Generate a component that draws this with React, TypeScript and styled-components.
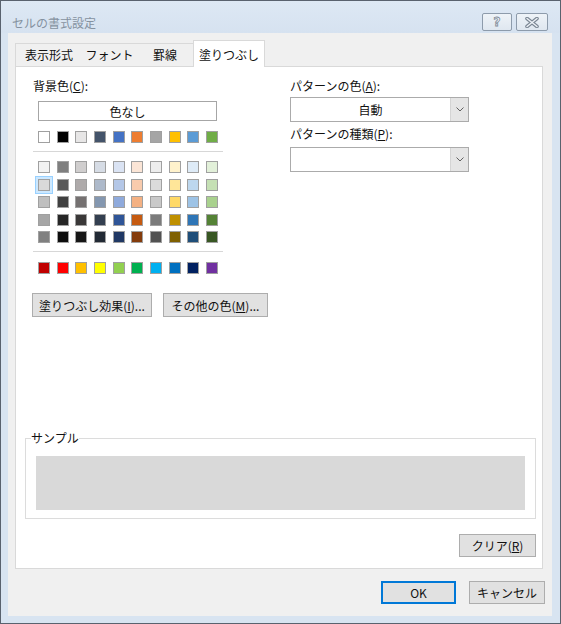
import * as React from 'react';
import styled, { createGlobalStyle } from 'styled-components';

const THEME_COLORS = ['#FFFFFF', '#000000', '#E7E6E6', '#44546A', '#4472C4', '#ED7D31', '#A5A5A5', '#FFC000', '#5B9BD5', '#70AD47'];

const TINTS = [
  ['#F2F2F2', '#7F7F7F', '#D0CECE', '#D6DCE5', '#DAE3F3', '#FBE5D6', '#EDEDED', '#FFF2CC', '#DEEBF7', '#E2F0D9'],
  ['#D9D9D9', '#595959', '#AEAAAA', '#ADB9CA', '#B4C7E7', '#F8CBAD', '#DBDBDB', '#FFE699', '#BDD7EE', '#C5E0B4'],
  ['#BFBFBF', '#404040', '#757171', '#8497B0', '#8FAADC', '#F4B183', '#C9C9C9', '#FFD966', '#9DC3E6', '#A9D18E'],
  ['#A6A6A6', '#262626', '#3A3838', '#333F50', '#2F5597', '#C55A11', '#7B7B7B', '#BF9000', '#2E75B6', '#548235'],
  ['#808080', '#0D0D0D', '#161616', '#222A35', '#203864', '#843C0C', '#525252', '#7F6000', '#1F4E79', '#385723'],
];

const STANDARD_COLORS = ['#C00000', '#FF0000', '#FFC000', '#FFFF00', '#92D050', '#00B050', '#00B0F0', '#0070C0', '#002060', '#7030A0'];

const TABS = [
  { label: '表示形式', width: 67 },
  { label: 'フォント', width: 55 },
  { label: '罫線', width: 56 },
  { label: '塗りつぶし', width: 72 },
];

const GlobalStyle = createGlobalStyle`
  html, body {
    margin: 0;
    padding: 0;
    width: 561px;
    height: 624px;
    overflow: hidden;
    background: #ffffff;
  }
  body {
    font-family: "Noto Sans CJK JP", "Noto Sans", sans-serif;
    font-size: 12px;
    color: #111;
  }
`;

function Chevron() {
  return (
    <svg width="8" height="5" viewBox="0 0 8 5">
      <polyline points="0.5,0.5 4,4 7.5,0.5" fill="none" stroke="#606060" strokeWidth="1" />
    </svg>
  );
}

function CloseGlyph() {
  return (
    <svg width="14" height="11" viewBox="0 0 14 11">
      <path d="M2 1.5 L12 9.5 M12 1.5 L2 9.5" stroke="#7a8693" strokeWidth="3.6" strokeLinecap="round" />
      <path d="M2 1.5 L12 9.5 M12 1.5 L2 9.5" stroke="#eef2f7" strokeWidth="1.4" strokeLinecap="round" />
    </svg>
  );
}

export default function App() {
  return (
    <>
      <GlobalStyle />
      <Window>
        <TitleBar>
          <Title>セルの書式設定</Title>
          <TitleButtons>
            <CaptionButton $width={30}>
              <HelpGlyph>?</HelpGlyph>
            </CaptionButton>
            <CaptionButton $width={32}>
              <CloseGlyph />
            </CaptionButton>
          </TitleButtons>
        </TitleBar>

        <Body>
          <TabRow>
            {TABS.map((t, i) => (
              <Tab key={t.label} $width={t.width} $active={i === TABS.length - 1} $first={i === 0}>
                {t.label}
              </Tab>
            ))}
          </TabRow>

          <Panel>
            <TopSection>
              <LeftColumn>
                <Label>
                  背景色(<u>C</u>):
                </Label>
                <NoColorBox>色なし</NoColorBox>
                <SwatchRow>
                  {THEME_COLORS.map((c) => (
                    <Swatch key={c} $color={c} />
                  ))}
                </SwatchRow>
                <Divider />
                <TintGrid>
                  {TINTS.map((row, r) =>
                    row.map((c, ci) => <Swatch key={`${r}-${ci}`} $color={c} $selected={r === 1 && ci === 0} />)
                  )}
                </TintGrid>
                <Divider />
                <SwatchRow>
                  {STANDARD_COLORS.map((c, i) => (
                    <Swatch key={`s${i}`} $color={c} />
                  ))}
                </SwatchRow>
              </LeftColumn>

              <RightColumn>
                <Label>
                  パターンの色(<u>A</u>):
                </Label>
                <Select>
                  <SelectValue>自動</SelectValue>
                  <SelectArrow>
                    <Chevron />
                  </SelectArrow>
                </Select>
                <Label $gap={4}>
                  パターンの種類(<u>P</u>):
                </Label>
                <Select $gap={5}>
                  <SelectValue />
                  <SelectArrow>
                    <Chevron />
                  </SelectArrow>
                </Select>
              </RightColumn>
            </TopSection>

            <EffectButtons>
              <Button $width={120} $height={24}>
                塗りつぶし効果(<u>I</u>)...
              </Button>
              <Button $width={105} $height={24}>
                その他の色(<u>M</u>)...
              </Button>
            </EffectButtons>

            <SampleGroup>
              <SampleLegend>サンプル</SampleLegend>
              <SampleFill />
            </SampleGroup>

            <ClearRow>
              <Button $width={77} $height={23}>
                クリア(<u>R</u>)
              </Button>
            </ClearRow>
          </Panel>

          <Footer>
            <Button $width={75} $height={23} $default>
              OK
            </Button>
            <Button $width={76} $height={23}>
              キャンセル
            </Button>
          </Footer>
        </Body>
      </Window>
    </>
  );
}

const Window = styled.div`
  width: 561px;
  height: 624px;
  box-sizing: border-box;
  border: 1px solid #59626e;
  background: #d8e4f1;
  display: flex;
  flex-direction: column;
  padding: 0 8px 7px 7px;
`;

const TitleBar = styled.div`
  height: 32px;
  display: flex;
  justify-content: space-between;
  align-items: flex-start;
  background: linear-gradient(#dde8f4, #d6e2f0);
  margin: 0 -8px 0 -7px;
  padding: 0 12px 0 11px;
`;

const Title = styled.div`
  margin-top: 14px;
  font-size: 12px;
  line-height: 15px;
  color: #8592a0;
`;

const TitleButtons = styled.div`
  display: flex;
  gap: 4px;
  margin-top: 12px;
`;

const CaptionButton = styled.div<{ $width: number }>`
  width: ${({ $width }) => $width}px;
  height: 18px;
  box-sizing: border-box;
  border: 1px solid #8d9bab;
  border-radius: 2px;
  background: linear-gradient(#eef3f8, #dfe7f0);
  display: flex;
  align-items: center;
  justify-content: center;
`;

const HelpGlyph = styled.span`
  font-family: "DejaVu Sans", sans-serif;
  font-weight: bold;
  font-size: 12px;
  line-height: 12px;
  color: #f2f5f9;
  -webkit-text-stroke: 0.8px #7f8b98;
`;

const Body = styled.div`
  flex: 1;
  background: #f0f0f0;
  display: flex;
  flex-direction: column;
  padding: 7px 7px 11px 7px;
`;

const TabRow = styled.div`
  height: 26px;
  display: flex;
  align-items: flex-end;
`;

const Tab = styled.div<{ $width: number; $active?: boolean; $first?: boolean }>`
  width: ${({ $width }) => $width}px;
  height: ${({ $active }) => ($active ? 27 : 23)}px;
  box-sizing: border-box;
  display: flex;
  align-items: center;
  justify-content: center;
  padding-top: ${({ $active }) => ($active ? 2 : 0)}px;
  border: 1px solid #d9d9d9;
  border-bottom: none;
  border-left-width: ${({ $first, $active }) => ($first || $active ? 1 : 0)}px;
  border-right-width: ${({ $active }) => ($active ? 1 : 0)}px;
  background: ${({ $active }) => ($active ? '#ffffff' : '#f0f0f0')};
  margin-bottom: ${({ $active }) => ($active ? -1 : 0)}px;
  position: relative;
  z-index: ${({ $active }) => ($active ? 1 : 0)};
  font-size: 12px;
  line-height: 14px;
  white-space: nowrap;
`;

const Panel = styled.div`
  height: 503px;
  box-sizing: border-box;
  margin-right: 2px;
  background: #ffffff;
  border: 1px solid #d9d9d9;
  display: flex;
  flex-direction: column;
  padding: 0 6px 11px 9px;
`;

const TopSection = styled.div`
  display: flex;
  margin-top: 11px;
`;

const LeftColumn = styled.div`
  width: 190px;
  margin-left: 8px;
  display: flex;
  flex-direction: column;
`;

const RightColumn = styled.div`
  width: 179px;
  margin-left: 67px;
  display: flex;
  flex-direction: column;
`;

const Label = styled.div<{ $gap?: number }>`
  height: 16px;
  line-height: 16px;
  font-size: 12px;
  margin-top: ${({ $gap }) => $gap ?? 0}px;
  white-space: nowrap;

  u {
    text-underline-offset: 1px;
  }
`;

const NoColorBox = styled.div`
  margin: 7px 6px 0 5px;
  height: 20px;
  box-sizing: border-box;
  border: 1px solid #a6a6a6;
  display: flex;
  align-items: center;
  justify-content: center;
  font-size: 12px;
`;

const SwatchRow = styled.div`
  margin-top: 10px;
  padding: 0 5px;
  display: grid;
  grid-template-columns: repeat(10, 12px);
  justify-content: space-between;
`;

const TintGrid = styled(SwatchRow)`
  margin-top: 9px;
  row-gap: 5.5px;
`;

const Swatch = styled.div<{ $color: string; $selected?: boolean }>`
  width: 12px;
  height: 12px;
  box-sizing: border-box;
  border: 1px solid #a0a0a0;
  background: ${({ $color }) => $color};
  box-shadow: ${({ $selected }) => ($selected ? '0 0 0 2px #cce8ff, 0 0 0 3px #99d1ff' : 'none')};
`;

const Divider = styled.div`
  height: 1px;
  background: #d7d7d7;
  margin-top: 8px;
`;

const Select = styled.div<{ $gap?: number }>`
  margin-top: ${({ $gap }) => $gap ?? 3}px;
  height: 25px;
  box-sizing: border-box;
  border: 1px solid #ababab;
  background: #ffffff;
  display: flex;
`;

const SelectValue = styled.div`
  flex: 1;
  display: flex;
  align-items: center;
  justify-content: center;
  font-size: 12px;
`;

const SelectArrow = styled.div`
  width: 17px;
  background: #e5e5e5;
  border-left: 1px solid #d4d4d4;
  display: flex;
  align-items: center;
  justify-content: center;
`;

const EffectButtons = styled.div`
  display: flex;
  gap: 11px;
  margin-top: 19px;
  margin-left: 7px;
`;

const Button = styled.div<{ $width: number; $height: number; $default?: boolean }>`
  width: ${({ $width }) => $width}px;
  height: ${({ $height }) => $height}px;
  box-sizing: border-box;
  background: #e1e1e1;
  border: 1px solid ${({ $default }) => ($default ? '#0078d7' : '#adadad')};
  box-shadow: ${({ $default }) => ($default ? 'inset 0 0 0 1px #0078d7' : 'none')};
  display: flex;
  align-items: center;
  justify-content: center;
  font-size: 12px;
  white-space: nowrap;

  u {
    text-underline-offset: 1px;
  }
`;

const SampleGroup = styled.fieldset`
  margin: auto 0 0 0;
  padding: 0 10px 8px 10px;
  border: 1px solid #dcdcdc;
  min-width: 0;
`;

const SampleLegend = styled.legend`
  padding: 0;
  margin-left: -5px;
  font-size: 12px;
  line-height: 14px;
`;

const SampleFill = styled.div`
  margin-top: 11px;
  height: 54px;
  background: #d9d9d9;
`;

const ClearRow = styled.div`
  display: flex;
  justify-content: flex-end;
  margin-top: 15px;
`;

const Footer = styled.div`
  display: flex;
  justify-content: flex-end;
  gap: 13px;
  margin-top: 12px;
`;
